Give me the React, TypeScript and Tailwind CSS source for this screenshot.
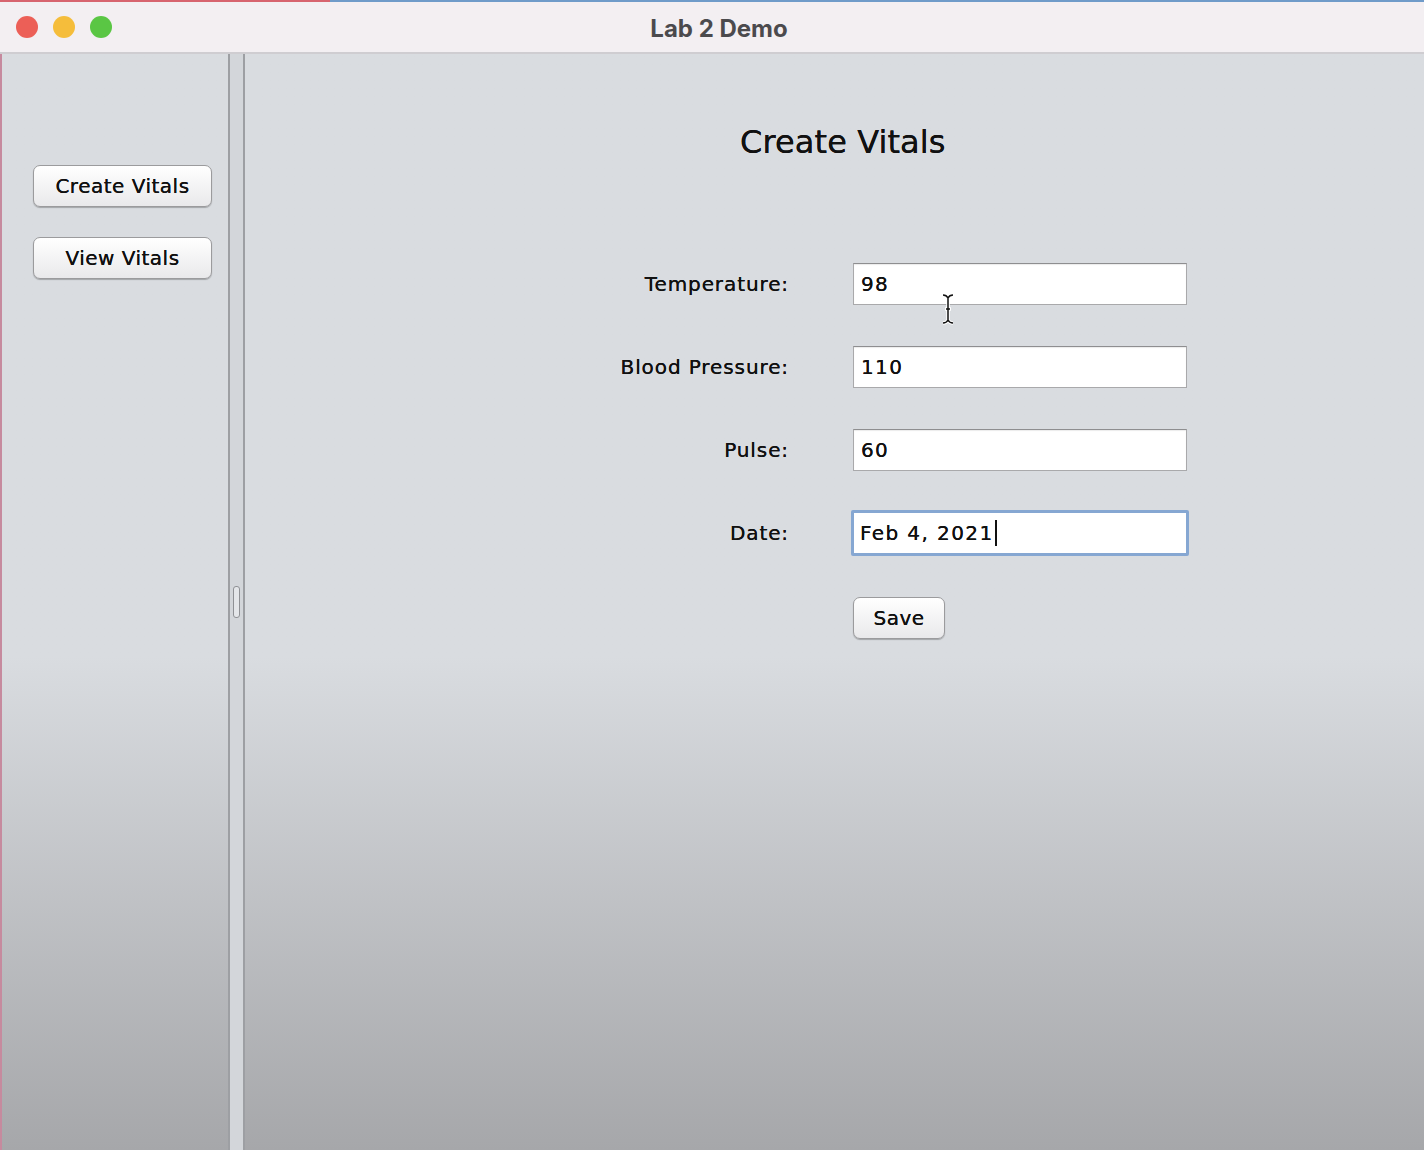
import React from 'react';

const uiFont = { fontFamily: '"DejaVu Sans", "Liberation Sans", sans-serif' };

function MacButton({ label, className }: { label: string; className: string }) {
  return (
    <button
      className={`flex items-center justify-center rounded-[7px] border border-[#9b9b9d] bg-gradient-to-b from-[#ffffff] to-[#e9e9eb] text-[20px] tracking-[0.5px] text-[#111] shadow-[0_1px_1px_rgba(0,0,0,0.25)] [text-shadow:0_0_0.3px_#000] ${className}`}
      style={uiFont}
    >
      {label}
    </button>
  );
}

function Field({ label, value, focused }: { label: string; value: string; focused?: boolean }) {
  return (
    <div className="flex h-[42px] items-center">
      <div
        className="w-[544px] text-right text-[20px] tracking-[0.9px] text-[#111] [text-shadow:0_0_0.3px_#000]"
        style={uiFont}
      >
        {label}
      </div>
      <div
        className={
          focused
            ? 'ml-[62px] flex h-[46px] w-[338px] items-center rounded-[2px] border-[3px] border-[#86a7d2] bg-white pl-[6px]'
            : 'ml-[64px] flex h-[42px] w-[334px] items-center border border-[#a9a9ab] border-t-[#8e8e90] bg-white pl-[7px] shadow-[inset_0_1px_1px_rgba(0,0,0,0.08)]'
        }
      >
        <span className="text-[20px] tracking-[1.4px] text-[#111] [text-shadow:0_0_0.3px_#000]" style={uiFont}>
          {value}
        </span>
        {focused && <span className="ml-[1px] h-[26px] w-[2px] bg-[#111]" />}
      </div>
    </div>
  );
}

export default function App() {
  return (
    <div className="relative flex h-[1150px] w-[1424px] flex-col overflow-hidden bg-[#d9dce0]">
      {/* window edge colours */}
      <div className="flex h-[2px] w-full">
        <div className="w-[330px] bg-[#d7646f]" />
        <div className="flex-1 bg-[#6f9bc9]" />
      </div>

      {/* Title bar */}
      <div className="relative flex h-[52px] items-center border-b-2 border-[#cfcdd1] bg-[#f3eff2]">
        <div className="ml-[16px] flex gap-[15px]">
          <div className="h-[22px] w-[22px] rounded-full bg-[#ec5f57]" />
          <div className="h-[22px] w-[22px] rounded-full bg-[#f5bd3b]" />
          <div className="h-[22px] w-[22px] rounded-full bg-[#5ac644]" />
        </div>
        <div
          className="absolute left-0 right-0 top-[9px] pl-[14px] text-center text-[24px] font-bold text-[#4b4a4d]"
          style={{ fontFamily: 'Inter, Roboto, "Liberation Sans", sans-serif' }}
        >
          Lab 2 Demo
        </div>
      </div>

      {/* Body */}
      <div className="flex flex-1 bg-gradient-to-b from-[#d9dce0] from-55% to-[#a6a7aa]">
        <div className="w-[2px] bg-[#c68a9e]" />

        {/* Left panel */}
        <div className="flex w-[226px] flex-col pt-[111px]">
          <MacButton label="Create Vitals" className="ml-[31px] h-[42px] w-[179px]" />
          <MacButton label="View Vitals" className="ml-[31px] mt-[30px] h-[42px] w-[179px]" />
        </div>

        {/* Split divider */}
        <div className="flex w-[17px] items-center border-l-2 border-r-2 border-[#9d9fa3] bg-[#d3d6da]">
          <div className="ml-[3px] h-[32px] w-[7px] rounded-[3px] border border-[#8f9195] bg-[#e4e6e9]" />
        </div>

        {/* Main panel */}
        <div className="relative flex flex-1 flex-col">
          <div
            className="pl-[495px] pt-[64px] text-[32px] tracking-[0.1px] text-[#111] [text-shadow:0_0_0.3px_#000]"
            style={uiFont}
          >
            Create Vitals
          </div>

          <div className="mt-[97px] flex flex-col gap-[41px]">
            <Field label="Temperature:" value="98" />
            <Field label="Blood Pressure:" value="110" />
            <Field label="Pulse:" value="60" />
            <Field label="Date:" value="Feb 4, 2021" focused />
          </div>

          <MacButton label="Save" className="ml-[608px] mt-[43px] h-[42px] w-[92px]" />

          {/* I-beam mouse cursor */}
          <svg className="absolute left-[695px] top-[239px]" width="16" height="32" viewBox="0 0 16 32">
            <path d="M3 2 C6 2 7 3 8 5 C9 3 10 2 13 2 M8 5 V27 M3 30 C6 30 7 29 8 27 C9 29 10 30 13 30 M5 16 H11" stroke="#fff" strokeWidth="3.5" fill="none" />
            <path d="M3 2 C6 2 7 3 8 5 C9 3 10 2 13 2 M8 5 V27 M3 30 C6 30 7 29 8 27 C9 29 10 30 13 30 M6 16 H10" stroke="#111" strokeWidth="1.5" fill="none" />
          </svg>
        </div>
      </div>
    </div>
  );
}
